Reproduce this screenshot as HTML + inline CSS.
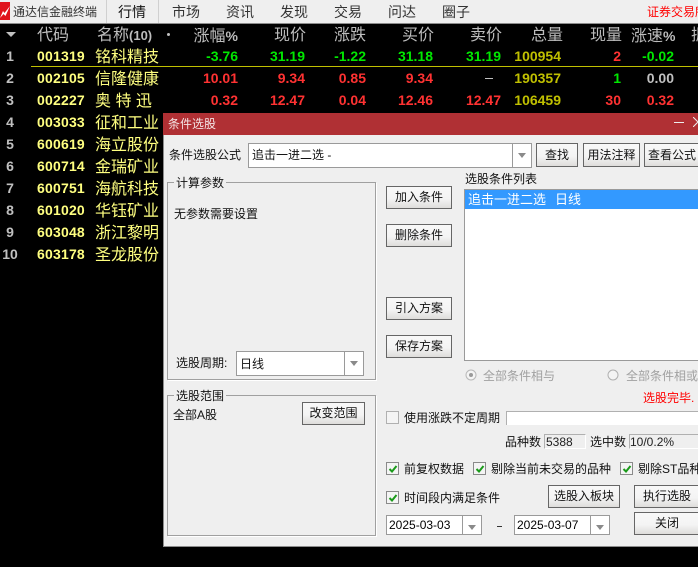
<!DOCTYPE html>
<html lang="zh"><head><meta charset="utf-8">
<style>
html,body{margin:0;padding:0;width:698px;height:567px;overflow:hidden;background:#000}
body{position:relative;font-family:"Liberation Sans","WenQuanYi Zen Hei","Noto Sans CJK SC",sans-serif;font-size:12px}
.a,.t,.h,.c,.v,.n,.r,.b,.cb,.cm{position:absolute}
.t{white-space:nowrap;line-height:16px;color:#111}
.m{font-size:14px;color:#333;top:4px;line-height:16px;position:absolute;white-space:nowrap}
.h{top:27px;font-size:16px;line-height:18px;color:#bdbdbd;white-space:nowrap}
.h b{font-size:14px}
.r{font:bold 14px/16px "Liberation Sans",sans-serif;color:#c0c0c0;width:18px;text-align:center;left:1px}
.c{left:37px;font:bold 14px/16px "Liberation Sans",sans-serif;color:#ffff80;letter-spacing:.2px}
.n{left:95px;font-size:16px;line-height:18px;color:#ffff80;white-space:pre}
.v{font:bold 14px/16px "Liberation Sans",sans-serif;white-space:nowrap}
.g{color:#00e800}.d{color:#ff3232}.y{color:#c0c000}.w{color:#c0c0c0}
.b{box-sizing:border-box;border:1px solid #666;background:linear-gradient(#f8f8f8 0,#f4f4f4 55%,#dedddb 100%);text-align:center;color:#111;font-size:12px;line-height:20px;white-space:nowrap;overflow:hidden}
.cb{box-sizing:border-box;width:13px;height:13px;border:1px solid #8a8a8a;background:#f4f4f4}
.cb svg{position:absolute;left:1px;top:1px}
.cm{box-sizing:border-box;border:1px solid #9a9a9a;background:#fff}
.ar{position:absolute;top:0;bottom:0;right:0;width:18px;border-left:1px solid #9a9a9a;background:#fff}
.ar:after{content:"";position:absolute;left:5px;top:9px;border:4px solid transparent;border-top:5px solid #8a8a8a;border-bottom:0}
.gp{position:absolute;box-sizing:border-box;border:1px solid #a0a0a0;box-shadow:1px 1px 0 #fff}
.lg{position:absolute;background:#efefef;padding:0 2px;line-height:16px;color:#111;white-space:nowrap}
</style></head><body>

<!-- top bar -->
<div class="a" style="left:0;top:0;width:698px;height:23px;background:#efefef;border-bottom:1px solid #8c8c8c"></div>
<svg class="a" style="left:0;top:2px" width="10" height="18" viewBox="0 0 10 18"><rect width="10" height="18" fill="#e0141c"/><path d="M0 16L3 9L4.500 11L10 4L5.500 14L3.500 12Z" fill="#fff"/></svg>
<div class="t" style="left:13px;top:4px;font-size:12px;color:#333;letter-spacing:0">通达信金融终端</div>
<div class="a" style="left:106px;top:0;width:1px;height:23px;background:#d0d0d0"></div>
<div class="a" style="left:158px;top:0;width:1px;height:23px;background:#d0d0d0"></div>
<div class="m" style="left:118px;color:#111">行情</div>
<div class="m" style="left:172px">市场</div>
<div class="m" style="left:226px">资讯</div>
<div class="m" style="left:280px">发现</div>
<div class="m" style="left:334px">交易</div>
<div class="m" style="left:388px">问达</div>
<div class="m" style="left:442px">圈子</div>
<div class="t" style="left:647px;top:4px;font-size:12px;color:#f00">证券交易所</div>

<!-- header -->
<div class="a" style="left:6px;top:32px;border:5px solid transparent;border-top:5px solid #c0c0c0;border-bottom:0"></div>
<div class="h" style="left:37px">代码</div>
<div class="h" style="left:97px">名称<b style="font-size:13px">(10)</b></div>
<div class="a" style="left:167px;top:33px;width:3px;height:3px;background:#c0c0c0;border-radius:2px"></div>
<div class="h" style="right:460px">涨幅<b>%</b></div>
<div class="h" style="left:274px">现价</div>
<div class="h" style="left:334px">涨跌</div>
<div class="h" style="left:402px">买价</div>
<div class="h" style="left:470px">卖价</div>
<div class="h" style="left:531px">总量</div>
<div class="h" style="left:590px">现量</div>
<div class="h" style="left:631px">涨速<b>%</b></div>
<div class="h" style="left:691px">振</div>

<!-- rows -->
<div class="r" style="top:48px">1</div><div class="c" style="top:48px">001319</div><div class="n" style="top:49px">铭科精技</div>
<div class="r" style="top:70px">2</div><div class="c" style="top:70px">002105</div><div class="n" style="top:71px">信隆健康</div>
<div class="r" style="top:92px">3</div><div class="c" style="top:92px">002227</div><div class="n" style="top:93px;word-spacing:0">奥 特 迅</div>
<div class="r" style="top:114px">4</div><div class="c" style="top:114px">003033</div><div class="n" style="top:115px">征和工业</div>
<div class="r" style="top:136px">5</div><div class="c" style="top:136px">600619</div><div class="n" style="top:137px">海立股份</div>
<div class="r" style="top:158px">6</div><div class="c" style="top:158px">600714</div><div class="n" style="top:159px">金瑞矿业</div>
<div class="r" style="top:180px">7</div><div class="c" style="top:180px">600751</div><div class="n" style="top:181px">海航科技</div>
<div class="r" style="top:202px">8</div><div class="c" style="top:202px">601020</div><div class="n" style="top:203px">华钰矿业</div>
<div class="r" style="top:224px">9</div><div class="c" style="top:224px">603048</div><div class="n" style="top:225px">浙江黎明</div>
<div class="r" style="top:246px">10</div><div class="c" style="top:246px">603178</div><div class="n" style="top:247px">圣龙股份</div>

<div class="a" style="left:31px;top:66px;width:667px;height:1px;background:#c0c000"></div>

<div class="v g" style="top:48px;right:460px">-3.76</div><div class="v g" style="top:48px;right:393px">31.19</div><div class="v g" style="top:48px;right:332px">-1.22</div><div class="v g" style="top:48px;right:265px">31.18</div><div class="v g" style="top:48px;right:197px">31.19</div><div class="v y" style="top:48px;right:137px">100954</div><div class="v d" style="top:48px;right:77px">2</div><div class="v g" style="top:48px;right:24px">-0.02</div>

<div class="v d" style="top:70px;right:460px">10.01</div><div class="v d" style="top:70px;right:393px">9.34</div><div class="v d" style="top:70px;right:332px">0.85</div><div class="v d" style="top:70px;right:265px">9.34</div><div class="a" style="left:485px;top:78px;width:8px;height:1px;background:#c0c0c0"></div><div class="v y" style="top:70px;right:137px">190357</div><div class="v g" style="top:70px;right:77px">1</div><div class="v w" style="top:70px;right:24px">0.00</div>

<div class="v d" style="top:92px;right:460px">0.32</div><div class="v d" style="top:92px;right:393px">12.47</div><div class="v d" style="top:92px;right:332px">0.04</div><div class="v d" style="top:92px;right:265px">12.46</div><div class="v d" style="top:92px;right:197px">12.47</div><div class="v y" style="top:92px;right:137px">106459</div><div class="v d" style="top:92px;right:77px">30</div><div class="v d" style="top:92px;right:24px">0.32</div>

<!-- dialog -->
<div class="a" style="left:163px;top:113px;width:535px;height:434px;background:#efefef;border-left:1px solid #8c8c8c;border-bottom:1px solid #8c8c8c;box-sizing:border-box"></div>
<div class="a" style="left:163px;top:113px;width:535px;height:22px;background:#b03034"></div>
<div class="t" style="left:168px;top:116px;color:#f4e4e4">条件选股</div>
<div class="a" style="left:674px;top:122px;width:10px;height:1px;background:#eee"></div>
<svg class="a" style="left:693px;top:117px" width="5" height="10"><path d="M0 0L5 5M5 5L0 10" stroke="#eee" fill="none"/></svg>

<div class="t" style="left:169px;top:147px">条件选股公式</div>
<div class="cm" style="left:248px;top:143px;width:284px;height:25px"><div class="ar"></div></div>
<div class="t" style="left:252px;top:147px">追击一进二选 -</div>
<div class="b" style="left:536px;top:143px;width:42px;height:24px;line-height:22px">查找</div>
<div class="b" style="left:583px;top:143px;width:57px;height:24px;line-height:22px">用法注释</div>
<div class="b" style="left:644px;top:143px;width:60px;height:24px;line-height:22px;text-align:left;padding-left:3px">查看公式</div>

<div class="gp" style="left:167px;top:182px;width:209px;height:198px"></div>
<div class="lg" style="left:174px;top:175px">计算参数</div>
<div class="t" style="left:174px;top:206px">无参数需要设置</div>
<div class="t" style="left:176px;top:355px">选股周期:</div>
<div class="cm" style="left:236px;top:351px;width:128px;height:25px"><div class="ar"></div></div>
<div class="t" style="left:240px;top:356px">日线</div>

<div class="b" style="left:386px;top:186px;width:66px;height:23px">加入条件</div>
<div class="b" style="left:386px;top:224px;width:66px;height:23px">删除条件</div>
<div class="b" style="left:386px;top:297px;width:66px;height:23px">引入方案</div>
<div class="b" style="left:386px;top:335px;width:66px;height:23px">保存方案</div>

<div class="gp" style="left:167px;top:395px;width:209px;height:141px"></div>
<div class="lg" style="left:174px;top:388px">选股范围</div>
<div class="t" style="left:173px;top:407px">全部A股</div>
<div class="b" style="left:302px;top:402px;width:63px;height:23px">改变范围</div>

<div class="t" style="left:465px;top:171px">选股条件列表</div>
<div class="cm" style="left:464px;top:189px;width:240px;height:172px"></div>
<div class="a" style="left:465px;top:190px;width:233px;height:19px;background:#3399ff"></div>
<div class="t" style="left:468px;top:192px;color:#fff;font-size:13px">追击一进二选</div>
<div class="t" style="left:555px;top:192px;color:#fff;font-size:13px">日线</div>

<svg class="a" style="left:465px;top:369px" width="12" height="12"><circle cx="6" cy="6" r="5" fill="#f4f4f4" stroke="#b8b8b8"/><circle cx="6" cy="6" r="2" fill="#9a9a9a"/></svg>
<div class="t" style="left:483px;top:368px;color:#a0a0a0">全部条件相与</div>
<svg class="a" style="left:607px;top:369px" width="12" height="12"><circle cx="6" cy="6" r="5" fill="#f4f4f4" stroke="#b0b0b0"/></svg>
<div class="t" style="left:626px;top:368px;color:#a0a0a0">全部条件相或</div>

<div class="t" style="left:643px;top:390px;color:#f00">选股完毕.</div>

<div class="cb" style="left:386px;top:411px;border-color:#b0b0b0"></div>
<div class="t" style="left:404px;top:410px">使用涨跌不定周期</div>
<div class="a" style="left:506px;top:411px;width:192px;height:14px;background:#fff;border-left:1px solid #b0b0b0;border-top:1px solid #b0b0b0;box-sizing:border-box"></div>

<div class="t" style="left:505px;top:434px">品种数</div>
<div class="a" style="left:544px;top:434px;width:42px;height:15px;box-sizing:border-box;border:1px solid #fff;border-top-color:#b0b0b0;border-left-color:#b0b0b0"></div>
<div class="t" style="left:546px;top:434px;color:#222">5388</div>
<div class="t" style="left:590px;top:434px">选中数</div>
<div class="a" style="left:629px;top:434px;width:69px;height:15px;box-sizing:border-box;border:1px solid #fff;border-top-color:#b0b0b0;border-left-color:#b0b0b0;border-right:0"></div>
<div class="t" style="left:630px;top:434px;color:#222">10/0.2%</div>

<div class="cb" style="left:386px;top:462px"><svg width="10" height="10"><path d="M1.500 5L4 7.500L8.500 2" stroke="#1a9a1a" stroke-width="2" fill="none"/></svg></div>
<div class="t" style="left:404px;top:461px">前复权数据</div>
<div class="cb" style="left:473px;top:462px"><svg width="10" height="10"><path d="M1.500 5L4 7.500L8.500 2" stroke="#1a9a1a" stroke-width="2" fill="none"/></svg></div>
<div class="t" style="left:491px;top:461px">剔除当前未交易的品种</div>
<div class="cb" style="left:620px;top:462px"><svg width="10" height="10"><path d="M1.500 5L4 7.500L8.500 2" stroke="#1a9a1a" stroke-width="2" fill="none"/></svg></div>
<div class="t" style="left:638px;top:461px">剔除ST品种</div>

<div class="cb" style="left:386px;top:491px"><svg width="10" height="10"><path d="M1.500 5L4 7.500L8.500 2" stroke="#1a9a1a" stroke-width="2" fill="none"/></svg></div>
<div class="t" style="left:404px;top:490px">时间段内满足条件</div>
<div class="b" style="left:548px;top:485px;width:72px;height:23px">选股入板块</div>
<div class="b" style="left:634px;top:485px;width:70px;height:23px;text-align:left;padding-left:8px">执行选股</div>

<div class="cm" style="left:386px;top:515px;width:96px;height:20px"><div class="ar"></div></div>
<div class="t" style="left:389px;top:517px;color:#000">2025-03-03</div>
<div class="a" style="left:497px;top:526px;width:5px;height:1px;background:#333"></div>
<div class="cm" style="left:514px;top:515px;width:96px;height:20px"><div class="ar"></div></div>
<div class="t" style="left:517px;top:517px;color:#000">2025-03-07</div>
<div class="b" style="left:634px;top:512px;width:70px;height:23px;text-align:left;padding-left:20px">关闭</div>

</body></html>
